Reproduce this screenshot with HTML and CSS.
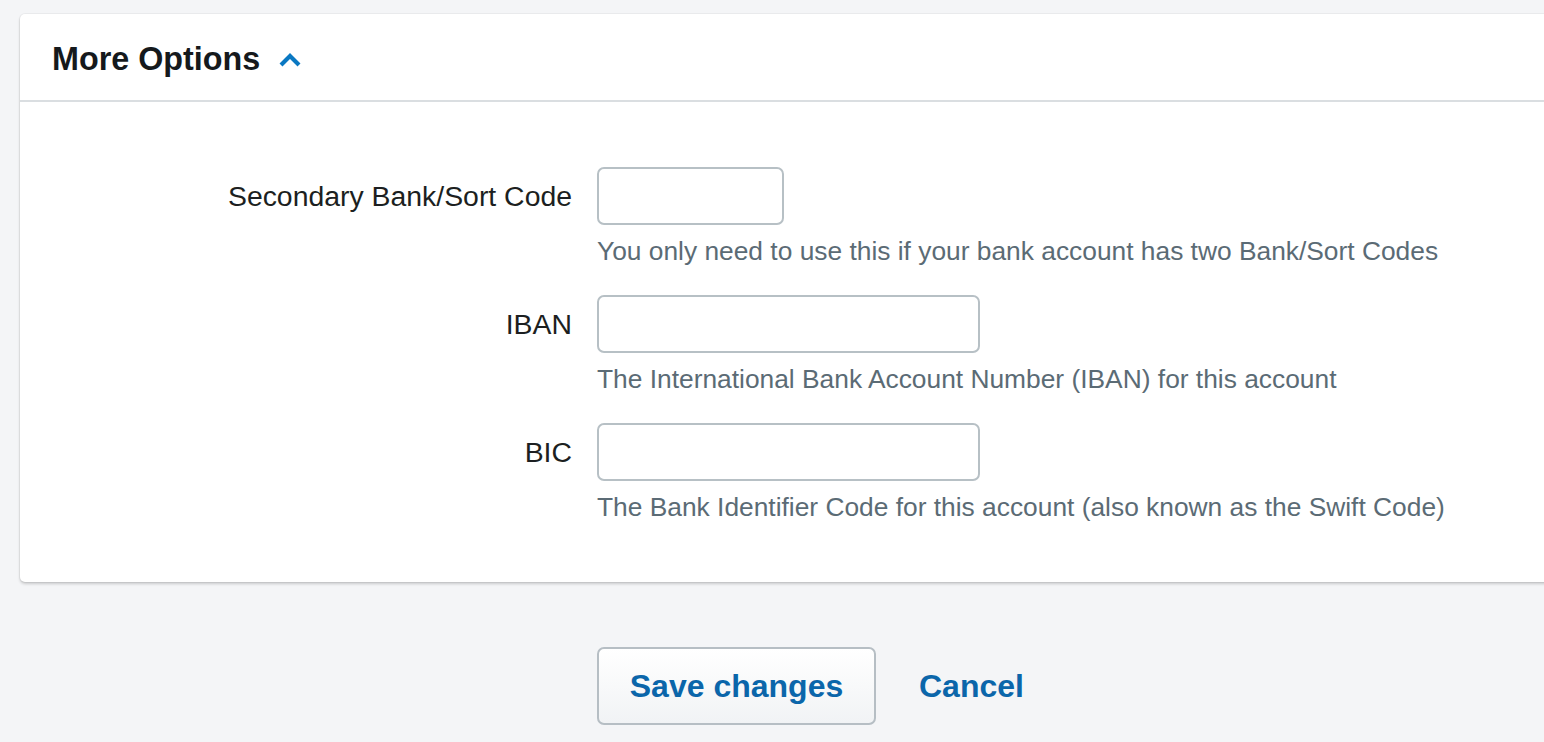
FILE: index.html
```html
<!DOCTYPE html>
<html lang="en">
<head>
<meta charset="utf-8">
<title>More Options</title>
<link rel="stylesheet" href="styles.css">
</head>
<body>
<main class="page">
  <section class="card">
    <header class="card-header">
      <h2 class="card-title">More Options</h2>
      <svg class="chevron" width="24" height="16" viewBox="0 0 24 16" aria-hidden="true">
        <path d="M3 13 L12 4 L21 13" fill="none" stroke="#0a78c2" stroke-width="4.2" stroke-linecap="butt" stroke-linejoin="miter"/>
      </svg>
    </header>
    <div class="card-body">
      <div class="field">
        <label class="field-label" for="sort2">Secondary Bank/Sort Code</label>
        <div class="field-control">
          <input id="sort2" class="input input-short" type="text">
          <p class="help">You only need to use this if your bank account has two Bank/Sort Codes</p>
        </div>
      </div>
      <div class="field">
        <label class="field-label" for="iban">IBAN</label>
        <div class="field-control">
          <input id="iban" class="input input-long" type="text">
          <p class="help">The International Bank Account Number (IBAN) for this account</p>
        </div>
      </div>
      <div class="field">
        <label class="field-label" for="bic">BIC</label>
        <div class="field-control">
          <input id="bic" class="input input-long" type="text">
          <p class="help">The Bank Identifier Code for this account (also known as the Swift Code)</p>
        </div>
      </div>
    </div>
  </section>
  <div class="actions">
    <button class="btn-save" type="button">Save changes</button>
    <a class="link-cancel" href="#">Cancel</a>
  </div>
</main>
</body>
</html>
```
FILE: styles.css
```css
* { box-sizing: border-box; }

html, body {
  margin: 0;
  padding: 0;
  background: #f4f5f7;
  overflow: hidden;
}

body {
  font-family: "Liberation Sans", Arial, Helvetica, sans-serif;
  color: #1c1f21;
}

.page {
  padding: 14px 0 0 20px;
}

.card {
  background: #ffffff;
  border-radius: 5px 0 0 5px;
  margin-right: -20px;
  box-shadow: 0 0 0 1px rgba(0, 0, 0, 0.04), 0 2px 3px rgba(0, 0, 0, 0.18);
}

.card-header {
  height: 88px;
  display: flex;
  align-items: center;
  padding: 4px 0 0 32px;
  border-bottom: 2px solid #dadee1;
}

.card-title {
  margin: 0;
  font-size: 32.3px;
  font-weight: 700;
  color: #15191c;
}

.chevron {
  margin-left: 18px;
  margin-top: 2px;
}

.card-body {
  padding: 65px 0 57px 0;
  display: flex;
  flex-direction: column;
  gap: 26px;
}

.field {
  display: grid;
  grid-template-columns: 552px 1fr;
  column-gap: 25px;
  align-items: start;
}

.field-label {
  text-align: right;
  font-size: 28.4px;
  line-height: 58px;
  height: 58px;
  color: #1c1f21;
}

.field-control {
  display: flex;
  flex-direction: column;
  align-items: flex-start;
}

.input {
  height: 58px;
  border: 2px solid #b7c0c5;
  border-radius: 7px;
  background: #ffffff;
  font-family: inherit;
  font-size: 26px;
  padding: 0 14px;
  margin: 0;
}

.input-short { width: 187px; }
.input-long { width: 383px; }

.help {
  margin: 8px 0 0 0;
  font-size: 26.35px;
  line-height: 36px;
  color: #5b6b75;
}

.actions {
  display: flex;
  align-items: center;
  gap: 43px;
  padding: 65px 0 0 577px;
}

.btn-save {
  width: 279px;
  height: 78px;
  border: 2px solid #b6bec4;
  border-radius: 7px;
  background: linear-gradient(#ffffff, #f1f3f5);
  font-family: inherit;
  font-size: 32px;
  font-weight: 700;
  color: #0b66aa;
  padding: 0;
  cursor: pointer;
}

.link-cancel {
  font-size: 32px;
  font-weight: 700;
  color: #0b66aa;
  text-decoration: none;
}
```
